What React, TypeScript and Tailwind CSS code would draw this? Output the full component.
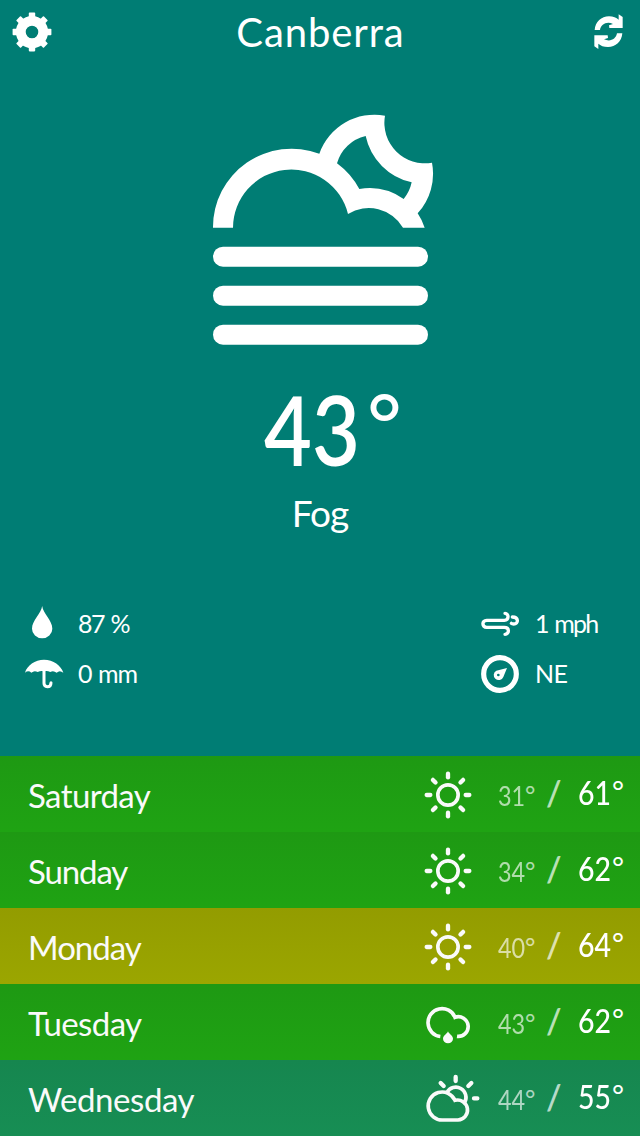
import type { ReactNode } from "react";

type Sky = "sun" | "rain" | "partly";

type Day = {
  name: string;
  nameClass: string;
  bg: string;
  sky: Sky;
  low: string;
  high: string;
};

const days: Day[] = [
  { name: "Saturday", nameClass: "tracking-[-0.6px]", bg: "from-[#1e9913] to-[#1fa313]", sky: "sun", low: "31", high: "61" },
  { name: "Sunday", nameClass: "tracking-[-1.1px]", bg: "from-[#1e9913] to-[#1fa313]", sky: "sun", low: "34", high: "62" },
  { name: "Monday", nameClass: "tracking-[-1px]", bg: "from-[#939c00] to-[#9ba600]", sky: "sun", low: "40", high: "64" },
  { name: "Tuesday", nameClass: "tracking-[-0.6px]", bg: "from-[#1e9913] to-[#1fa313]", sky: "rain", low: "43", high: "62" },
  { name: "Wednesday", nameClass: "tracking-[-0.4px]", bg: "from-[#16864f] to-[#178e54]", sky: "partly", low: "44", high: "55" },
];

function GearIcon() {
  return (
    <svg viewBox="-21 -21 42 42" className="h-[42px] w-[42px]" fill="white">
      {[0, 45, 90, 135].map((a) => (
        <rect key={a} x="-3.2" y="-19.4" width="6.4" height="38.8" rx="0.8" transform={`rotate(${a})`} mask="url(#gear-hole)" />
      ))}
      <circle r="11.2" fill="none" stroke="white" strokeWidth="9.8" />
      <mask id="gear-hole" maskUnits="userSpaceOnUse" x="-21" y="-21" width="42" height="42">
        <rect x="-21" y="-21" width="42" height="42" fill="white" />
        <circle r="7" fill="black" />
      </mask>
    </svg>
  );
}

function RefreshIcon() {
  const arrow = "M74 89C76 64 94 48 117 48C130 48 139 52 146 58V42L158 50V83H118L117 75L129 71C110 62 93 72 90 89Z";
  return (
    <svg viewBox="60 32 111 129" className="h-[43px] w-[37px]" fill="white">
      <path d={arrow} />
      <path d={arrow} transform="rotate(180 115.5 94)" />
    </svg>
  );
}

function FogNightIcon() {
  return (
    <svg viewBox="0 0 750 780" className="ml-[200px] h-[260px] w-[250px]" fill="white">
      <path
        fillRule="evenodd"
        d="M39 383A236 235 0 0 1 358 161A176 176 0 0 1 555 47A121.5 121.5 0 0 0 696 188A176 176 0 0 1 653 340A179 179 0 0 1 674 383H609A119 119 0 0 0 444 342A175 175 0 0 0 99 383Z
           M411 190A116 116 0 0 1 497 108A181 181 0 0 0 635 247A116 116 0 0 1 611 297A179 179 0 0 0 478 267A236 236 0 0 0 411 190Z"
      />
      <rect x="39" y="440" width="645" height="60" rx="30" />
      <rect x="39" y="557" width="645" height="60" rx="30" />
      <rect x="39" y="674" width="645" height="60" rx="30" />
    </svg>
  );
}

function DropIcon() {
  return (
    <svg viewBox="42 27 114 114" className="h-[38px] w-[38px]" fill="white">
      <path d="M96.500 33C99 56 127 76 127 101A30.500 29 0 0 1 66 101C66 76 94 56 96.500 33Z" />
    </svg>
  );
}

function UmbrellaIcon() {
  return (
    <svg viewBox="42 177 120 114" className="h-[38px] w-10">
      <path d="M45 233C51 211 75 194 102 194C130 194 153 211 160 233Q149 224 140 233Q130 225 121 231Q111 226 102 229Q93 226 83 231Q73 225 64 233Q55 225 45 233Z" fill="white" />
      <path d="M102 226V265Q102 275 112 275Q123 275 123 263" fill="none" stroke="white" strokeWidth="9" strokeLinecap="round" />
    </svg>
  );
}

function WindIcon() {
  return (
    <svg viewBox="33 28 117 114" className="h-[38px] w-[39px]" fill="none" stroke="white" strokeWidth="10" strokeLinecap="round">
      <path d="M105 56C117 56 118 77 103 77H50C35 77 35 98 50 98H103C120 98 118 119 105 119" />
      <path d="M127 67C146 67 147 88 131 88Q126 88 124 86" />
    </svg>
  );
}

function CompassIcon() {
  return (
    <svg viewBox="33 177 114 114" className="h-[38px] w-[38px] overflow-visible">
      <circle cx="90" cy="237" r="49" fill="none" stroke="white" strokeWidth="15.5" />
      <path fillRule="evenodd" fill="white" d="M111 219L100 246A15 15 0 1 1 79 227ZM85 236A4 4 0 1 0 85 244A4 4 0 1 0 85 236Z" />
    </svg>
  );
}

function SkyIcon({ sky }: { sky: Sky }) {
  if (sky === "sun") {
    return (
      <svg viewBox="30 57 192 156" className="h-[52px] w-16" fill="none" stroke="#fafafa">
        <circle cx="114" cy="135" r="30.5" strokeWidth="11" />
        {[0, 45, 90, 135, 180, 225, 270, 315].map((a) => (
          <path key={a} d="M114 71V82" strokeWidth="13" strokeLinecap="round" transform={`rotate(${a} 114 135)`} />
        ))}
      </svg>
    );
  }
  if (sky === "rain") {
    return (
      <svg viewBox="30 48 192 156" className="h-[52px] w-16">
        <path d="M91 166.500A42 42 0 1 1 135 109A29.500 29.500 0 1 1 141 166" fill="none" stroke="#fafafa" strokeWidth="11" />
        <path d="M114 151C116 159 129 163 129 173A15 14 0 0 1 99 173C99 163 112 159 114 151Z" fill="#fafafa" />
      </svg>
    );
  }
  return (
    <svg viewBox="30 276 192 156" className="h-[52px] w-16" fill="none" stroke="#fafafa">
      <path d="M98 417A42 42 0 1 1 135 358A30 30 0 1 1 144 417Z" strokeWidth="11" />
      <path d="M111 334A30 30 0 0 1 164 364" strokeWidth="11" />
      <path d="M137 288V300M92 306L101 315M184 306L175 315M192 352H202" strokeWidth="13" strokeLinecap="round" />
    </svg>
  );
}

function Stat({ icon, className, children }: { icon: ReactNode; className: string; children: ReactNode }) {
  return (
    <div className="flex h-[50px] items-center">
      <div className="flex w-[54px] items-center">{icon}</div>
      <span className={`whitespace-pre text-[25px] leading-[50px] ${className}`}>{children}</span>
    </div>
  );
}

function DayRow({ day }: { day: Day }) {
  return (
    <div className={`flex h-[76px] items-center bg-linear-to-b ${day.bg} pt-0.5`}>
      <span className={`w-[392px] pl-7 text-[33px] leading-[74px] text-[#fafafa] ${day.nameClass}`}>{day.name}</span>
      <div className="w-16 translate-x-7">
        <SkyIcon sky={day.sky} />
      </div>
      <div className="ml-[42px] flex w-12 pt-0.5 text-[26px] leading-[74px] text-white/65">
        <span className="w-[27px]">
          <span className="inline-block origin-left scale-x-90">{day.low}</span>
        </span>
        <span className="text-[25px] leading-[71px]">°</span>
      </div>
      <span className="w-8 pb-1 text-[34px] leading-[72px] font-semibold text-white/70">/</span>
      <div className="flex pb-1 text-[32px] leading-[72px]">
        <span className="w-[34px]">
          <span className="inline-block origin-left scale-x-[0.89] font-medium">{day.high}</span>
        </span>
        <span className="text-[29px] leading-[68px]">°</span>
      </div>
    </div>
  );
}

export default function App() {
  return (
    <div className="flex h-[1136px] w-[640px] flex-col overflow-hidden bg-[#007d74] font-['Gill_Sans','Lato',sans-serif] text-white">
      <header className="flex h-16 items-center justify-between pr-[13px] pl-[11px]">
        <GearIcon />
        <h1 className="pr-0.5 text-[40px] leading-[61px] tracking-[0.9px]">Canberra</h1>
        <RefreshIcon />
      </header>

      <main className="flex h-[692px] flex-col pt-9">
        <FogNightIcon />
        <div className="mt-[21px] flex h-24 pl-[264px] text-[96px] leading-[96px] font-semibold">
          <span className="w-[103px]">
            <span className="inline-block origin-left scale-x-[0.86]">43</span>
          </span>
          <span className="text-[84px] leading-[82px] font-medium">°</span>
        </div>
        <p className="mt-3.5 text-center text-[37px] leading-[44px] tracking-[-1px]">Fog</p>

        <div className="mt-[63px] flex justify-between pl-6">
          <div>
            <Stat icon={<DropIcon />} className="tracking-[-1.6px] [word-spacing:2px]">87 %</Stat>
            <Stat icon={<UmbrellaIcon />} className="tracking-[-1px] [word-spacing:1px]">0 mm</Stat>
          </div>
          <div className="w-[159px]">
            <Stat icon={<WindIcon />} className="tracking-[-1.8px] [word-spacing:2px]">1 mph</Stat>
            <Stat icon={<CompassIcon />} className="tracking-[-0.6px]">NE</Stat>
          </div>
        </div>
      </main>

      <section>
        {days.map((day) => (
          <DayRow key={day.name} day={day} />
        ))}
      </section>
    </div>
  );
}
